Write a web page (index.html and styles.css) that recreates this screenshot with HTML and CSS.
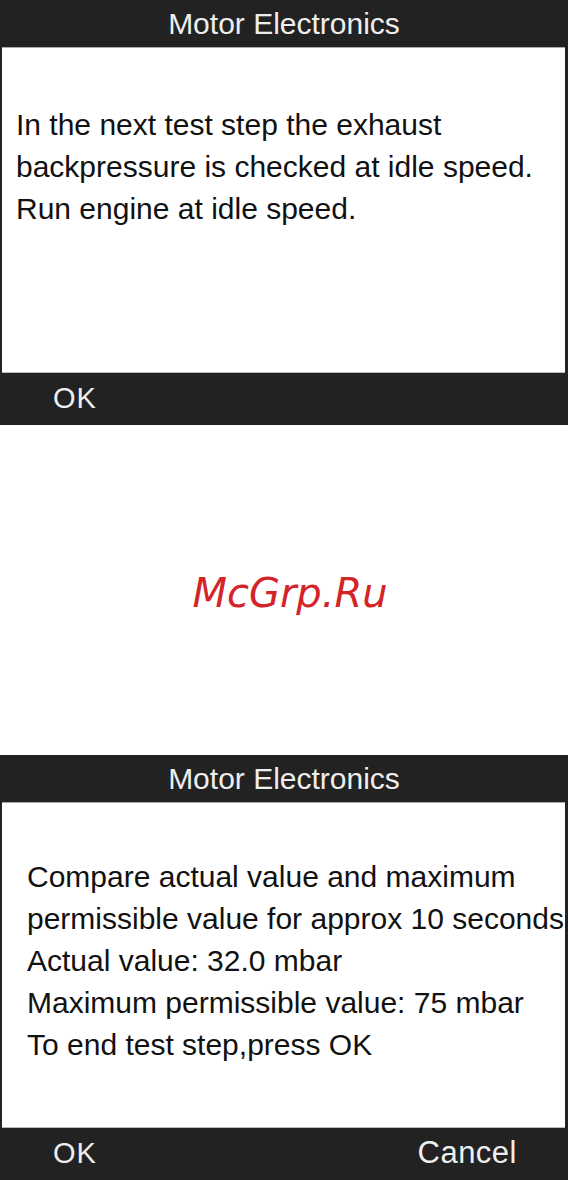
FILE: index.html
```html
<!DOCTYPE html>
<html>
<head>
<meta charset="utf-8">
<link rel="stylesheet" href="styles.css">
</head>
<body>
<div class="screen">
  <div class="hdr">Motor Electronics</div>
  <div class="content c1">
    <div>In the next test step the exhaust</div>
    <div>backpressure is checked at idle speed.</div>
    <div>Run engine at idle speed.</div>
  </div>
  <div class="foot"><span class="ok">OK</span></div>
</div>
<div class="gap"><span class="mark">McGrp.Ru</span></div>
<div class="screen s2">
  <div class="hdr">Motor Electronics</div>
  <div class="content c2">
    <div>Compare actual value and maximum</div>
    <div>permissible value for approx 10 seconds</div>
    <div>Actual value: 32.0 mbar</div>
    <div>Maximum permissible value: 75 mbar</div>
    <div>To end test step,press OK</div>
  </div>
  <div class="foot"><span class="ok">OK</span><span class="cancel">Cancel</span></div>
</div>
</body>
</html>
```
FILE: styles.css
```css
html, body {
  margin: 0;
  padding: 0;
  background: #fff;
}
body {
  width: 568px;
  font-family: "Liberation Sans", Arial, sans-serif;
}
.screen {
  height: 425px;
  display: flex;
  flex-direction: column;
  background: #fff;
  border-left: 2px solid #222;
  border-right: 3px solid #222;
  overflow: hidden;
}
.hdr {
  height: 47px;
  flex: none;
  background: #222;
  color: #eee;
  font-size: 30px;
  line-height: 47px;
  text-align: center;
  margin: 0 -3px 0 -2px;
}
.content {
  flex: 1;
  color: #111;
  font-size: 30px;
  line-height: 42px;
  white-space: nowrap;
  overflow: hidden;
  border-top: 1px solid #aaa;
  border-bottom: 1px solid #bbb;
}
.c1 {
  padding: 56px 0 0 14px;
}
.c2 {
  padding: 53px 0 0 25px;
}
.foot {
  height: 52px;
  flex: none;
  background: #222;
  color: #eee;
  font-size: 30px;
  line-height: 50px;
  display: flex;
  justify-content: space-between;
  padding: 0 51px 0 53px;
  margin: 0 -3px 0 -2px;
}
.ok {
  font-size: 29px;
  letter-spacing: 1px;
}
.cancel {
  font-size: 31px;
  letter-spacing: 0.5px;
}
.gap {
  height: 330px;
  display: flex;
  align-items: center;
  justify-content: center;
}
.mark {
  font-family: "DejaVu Sans", sans-serif;
  font-style: oblique;
  font-size: 40px;
  color: #d4242a;
  margin-left: 12px;
  margin-top: 6px;
}
```
